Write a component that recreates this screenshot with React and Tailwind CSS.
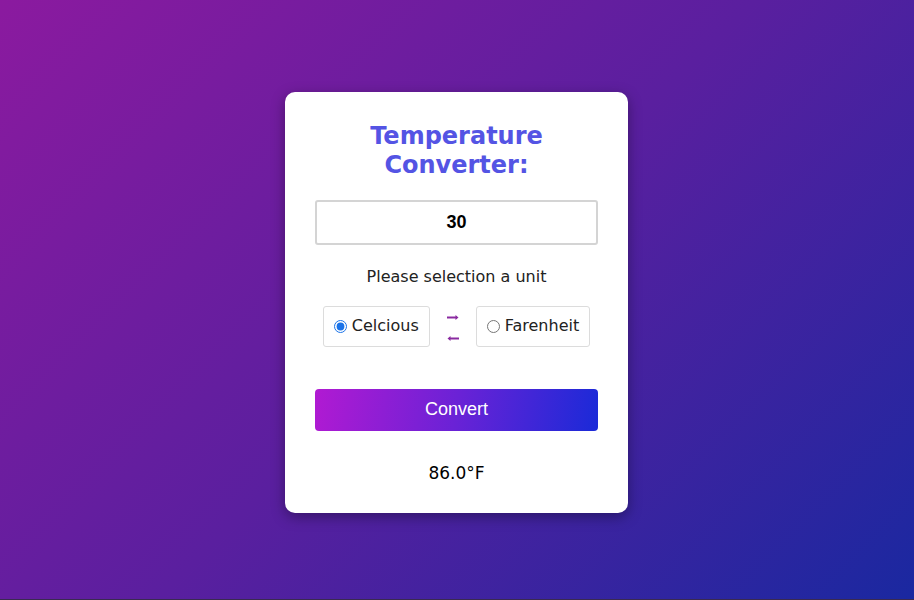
import React, { useState } from 'react';

export default function App() {
    const [value, setValue] = useState('30');
    const [unit, setUnit] = useState('c');

    const result = unit === 'c'
        ? `${(parseFloat(value) * 9 / 5 + 32).toFixed(1)}°F`
        : `${((parseFloat(value) - 32) * 5 / 9).toFixed(1)}°C`;

    return (
        <div className="min-h-screen w-full pt-[6px] pr-[1px] flex items-center justify-center bg-[linear-gradient(135deg,#8b1a9f_0%,#5a1f9f_50%,#1a28a0_100%)] border-b border-[#3a2a50]">
            <div className="w-[343px] bg-white rounded-[10px] shadow-[0_4px_14px_rgba(0,0,0,0.35)] px-[30px] pt-[30px] pb-[27px] flex flex-col items-center">
                <h1 className="text-center text-[24px] leading-[29px] font-bold text-[#5454e4] font-['DejaVu_Sans',sans-serif]">
                    Temperature<br />Converter:
                </h1>

                <input
                    value={value}
                    onChange={(e) => setValue(e.target.value)}
                    className="mt-[20px] w-full h-[45px] border-2 border-[#d4d4d4] rounded-[3px] text-center text-[18px] font-bold text-black font-['Liberation_Sans',Arial,sans-serif] outline-none"
                />

                <p className="mt-[20px] text-[16px] text-[#222] font-['DejaVu_Sans',sans-serif]">
                    Please selection a unit
                </p>

                <div className="mt-[17px] flex items-center gap-[17px] font-['DejaVu_Sans',sans-serif] text-[16px] text-[#222]">
                    <label className="h-[41px] px-[10px] flex items-center gap-[5px] border border-[#dcdcdc] rounded-[3px]">
                        <input type="radio" name="unit" checked={unit === 'c'} onChange={() => setUnit('c')} className="w-[13px] h-[13px] accent-[#1a73e8]" />
                        Celcious
                    </label>
                    <svg width="12" height="30" viewBox="0 0 12 30">
                        <path d="M0 6.5h10" stroke="#8a2aa0" strokeWidth="2" />
                        <path d="M8.5 4l3 2.5-3 2.5z" fill="#8a2aa0" />
                        <path d="M2 27.5h10" stroke="#8a2aa0" strokeWidth="2" />
                        <path d="M3.5 25l-3 2.5 3 2.5z" fill="#8a2aa0" />
                    </svg>
                    <label className="h-[41px] px-[10px] flex items-center gap-[5px] border border-[#dcdcdc] rounded-[3px]">
                        <input type="radio" name="unit" checked={unit === 'f'} onChange={() => setUnit('f')} className="w-[13px] h-[13px]" />
                        Farenheit
                    </label>
                </div>

                <button className="mt-[42px] w-full h-[42px] rounded-[4px] bg-[linear-gradient(100deg,#b11ad2_0%,#6a22d6_50%,#1a2ad8_100%)] text-white text-[18px] font-['Liberation_Sans',Arial,sans-serif]">
                    Convert
                </button>

                <p className="mt-[30px] text-[17px] text-black font-['DejaVu_Sans',sans-serif]">
                    {result}
                </p>
            </div>
        </div>
    );
}
